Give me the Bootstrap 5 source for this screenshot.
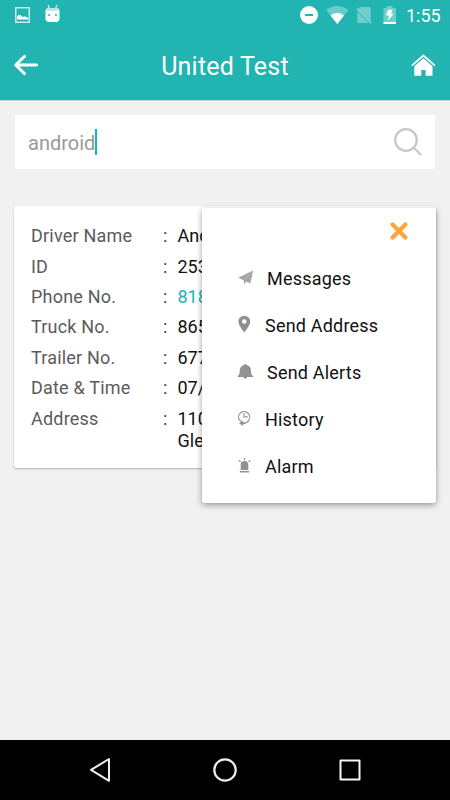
<!DOCTYPE html>
<html lang="en">
<head>
<meta charset="utf-8">
<meta name="viewport" content="width=device-width, initial-scale=1">
<title>United Test</title>
<link rel="stylesheet" href="https://cdn.jsdelivr.net/npm/bootstrap@5.3.0/dist/css/bootstrap.min.css">
<style>
body{font-family:Roboto,sans-serif;background:#f1f1f1;font-size:18px;line-height:22px;letter-spacing:.2px}
.screen{width:450px;height:800px;overflow:hidden}
svg{display:block;flex:none}
.app-head{background:#21b4b1;height:100px;box-shadow:0 1px 0 #bfdedf}
.status{height:30px;padding:0 10px 0 13px}
.clock{font-size:18px;letter-spacing:0;width:34px;padding-top:1px;white-space:nowrap}
.status-icons{margin-right:1px}
.toolbar{height:70px;padding:0 14px 0 13px}
.title{font-size:25px;line-height:30px;letter-spacing:.2px;padding:3px 0 0 1px}
.search{height:54px;margin:15px 15px 0;padding:0 13px;color:#999}
.search-text{font-size:20px;letter-spacing:0;padding-top:2px}
.caret{width:2.5px;height:26px;background:#10b9ba;margin-left:-.5px}
.driver{height:262px;margin:36.5px 14px 0;padding:19.8px 17px 0;border-radius:3px;box-shadow:0 1px 2px rgba(0,0,0,.28)}
.field-row{height:30.4px;line-height:22px}
.field-label{width:132px;color:#5b5b5b}
.colon{width:14.5px;color:#444}
.field-value{color:#111;white-space:nowrap;letter-spacing:0}
.phone{color:#19b5b5}
.menu{left:188px;top:2px;width:234px;height:295px;border-radius:3px;box-shadow:0 2px 6px rgba(0,0,0,.38);color:#111}
.menu-top{height:46px;padding:14px 28px 0}
.menu-item{height:47.1px;padding-left:35px}
.menu-item span{padding-top:3px}
.menu-icon{margin-right:14px}
.android-nav{height:60px}
.key{width:125px}
</style>
<script src="https://cdn.jsdelivr.net/npm/bootstrap@5.3.0/dist/js/bootstrap.bundle.min.js"></script>
</head>
<body>
<div class="screen d-flex flex-column">
  <header class="app-head text-white flex-shrink-0">
    <div class="status d-flex align-items-center">
      <svg width="52" height="30" viewBox="13 0 52 30"><path d="M15.800 7.800h13.400v14.400h-13.400z" fill="none" stroke="#fff" stroke-opacity=".75" stroke-width="1.500"/><path d="M17 19.500v-3l1.500-1.500h2l2 2 1.500-.6h1.500l2.500 1.600v1.500z" fill="#fff"/><path d="M48 5l1.500 3.500M57 5l-1.500 3.500" stroke="#fff" stroke-opacity=".75" stroke-width="1.300"/><path d="M47.500 8h10l2 2v9.500l-2 2.500h-10l-2-2.500v-9.500z" fill="#fff"/><path d="M47.500 8h10l1.200 2.800h-12.400z" fill="#b9e5e4"/><path d="M48 14h2v2h-2zm7 0h2v2h-2z" fill="#5ac7c5"/></svg>
      <svg class="status-icons ms-auto" width="106" height="30" viewBox="300 0 106 30"><circle cx="310" cy="15" r="9" fill="#fff"/><path d="M306 15h8" stroke="#21b4b1" stroke-width="2"/><path d="M327 10q11-8 22.500 0l-11.200 14z" fill="#fff" opacity=".33"/><path d="M331.500 15.500q6.500-4.800 13.500 0l-6.700 8.500z" fill="#fff"/><path d="M361 7h9.500l1.300 1.300v14.700h-13.500v-13z" fill="#fff" opacity=".35"/><path d="M356.500 8.500l15.800 15.200" stroke="#21b4b1" stroke-width="2"/><path d="M357.500 8.500l15 15" stroke="#8bd5d3" stroke-width="1.300"/><path d="M384.500 8h3v-2h6v2h3.500v16h-12.500z" fill="#fff" opacity=".35"/><path d="M384.500 22h12.500v2h-12.500z" fill="#fff"/><path d="M389 9.800h4.500l-1.400 4h2.600l-6 7.200 1.500-5.400h-3.200z" fill="#fff"/></svg>
      <span class="clock">1:55</span>
    </div>
    <div class="toolbar d-flex align-items-center justify-content-between">
      <svg width="26" height="24" viewBox="13 53 26 24" fill="none" stroke="#fff" stroke-width="2.900" stroke-linecap="round" stroke-linejoin="round"><path d="M16 65h20.600M24.500 56.400l-8.800 8.600 8.800 8.600"/></svg>
      <span class="title">United Test</span>
      <svg width="26" height="24" viewBox="410 53 26 24"><path d="M411.800 65.700l11.600-10.200 11.600 10.200" fill="none" stroke="#fff" stroke-width="1.700"/><path d="M414.300 66.200l9.100-7.900 9.100 7.900v9.600h-6.900v-5.800h-4.300v5.800h-7z" fill="#fff"/></svg>
    </div>
  </header>
  <main class="flex-grow-1">
    <div class="search bg-white d-flex align-items-center">
      <span class="search-text">android</span><span class="caret"></span>
      <svg class="ms-auto" width="28" height="28" viewBox="394 128.500 28 28" fill="none" stroke="#c8c8c8" stroke-width="2.200" stroke-linecap="round"><circle cx="406" cy="140.500" r="10.800"/><path d="M413.800 148.300l6.700 6.700"/></svg>
    </div>
    <section class="driver bg-white position-relative">
      <div class="field-row d-flex"><span class="field-label">Driver Name</span><span class="colon">:</span><span class="field-value">And</span></div>
      <div class="field-row d-flex"><span class="field-label">ID</span><span class="colon">:</span><span class="field-value">253</span></div>
      <div class="field-row d-flex"><span class="field-label">Phone No.</span><span class="colon">:</span><span class="field-value phone">818</span></div>
      <div class="field-row d-flex"><span class="field-label">Truck No.</span><span class="colon">:</span><span class="field-value">865</span></div>
      <div class="field-row d-flex"><span class="field-label">Trailer No.</span><span class="colon">:</span><span class="field-value">677</span></div>
      <div class="field-row d-flex"><span class="field-label">Date &amp; Time</span><span class="colon">:</span><span class="field-value">07/</span></div>
      <div class="field-row d-flex"><span class="field-label">Address</span><span class="colon">:</span><span class="field-value">110<br>Gle</span></div>
      <div class="menu bg-white position-absolute">
        <div class="menu-top d-flex justify-content-end"><svg width="18" height="18" viewBox="0 0 18 18" stroke="#ffa43a" stroke-width="4.200" stroke-linecap="round"><path d="M2.600 2.600l12.800 12.800M15.400 2.600L2.600 15.400"/></svg></div>
        <div class="menu-item d-flex align-items-center"><svg class="menu-icon" width="16" height="18" viewBox="237 268 16 18"><path d="M253 270.500l-2.600 13-4.300-2-2 3-.3-4.200-5.600-2.500z" fill="#a5a5a5"/><path d="M250.500 273.500l-6.500 6.800" fill="none" stroke="#ccc" stroke-width=".5"/></svg><span>Messages</span></div>
        <div class="menu-item d-flex align-items-center"><svg class="menu-icon" width="14" height="18" viewBox="237 315.500 14 18"><path d="M244.300 316.200a5.900 5.900 0 0 0-5.900 5.700c0 4 5.900 11 5.900 11s5.900-7 5.900-11a5.900 5.900 0 0 0-5.900-5.700zm0 3.500a2.300 2.300 0 1 1 0 4.600 2.300 2.300 0 0 1 0-4.600z" fill="#909090" fill-rule="evenodd"/></svg><span>Send Address</span></div>
        <div class="menu-item d-flex align-items-center"><svg class="menu-icon" width="16" height="18" viewBox="237 362 16 18"><path d="M245.300 364c.8 0 1 .4 1.100.9 3.400.7 4.600 3 4.600 6 0 3 .5 3.700 1.900 5v1h-5.700q-.3 1.800-1.900 1.800t-1.900-1.800h-5.500v-1c1.400-1.300 1.800-2 1.800-5 0-3 1.200-5.300 4.500-6 .1-.5.300-.9 1.100-.9z" fill="#929292"/></svg><span>Send Alerts</span></div>
        <div class="menu-item d-flex align-items-center"><svg class="menu-icon" width="14" height="18" viewBox="237 409 14 18" fill="none" stroke="#949494" stroke-width="1.200"><path d="M239.600 420.500a5.600 5.600 0 1 1 9.200-.2c-.9 1.700-3 3.100-5.500 3.400"/><path d="M244 413.200v3.600h3.600M239.600 420.200l2 1.200"/><path d="M239 423.300l3.800-2.800v1.800h2.200v2h-2.200v1.700z" fill="#949494" stroke="none"/></svg><span>History</span></div>
        <div class="menu-item d-flex align-items-center"><svg class="menu-icon" width="14" height="18" viewBox="237 456 14 18"><path d="M240.700 470v-5.200a3.800 3.800 0 0 1 7.600 0v5.200zM239.800 470.900h9.300v1.500h-9.300z" fill="#929292"/><path d="M244.500 458v2.200M238.600 460.400l2 1.400M250.500 460.400l-2 1.400" stroke="#929292" stroke-width="1.200"/></svg><span>Alarm</span></div>
      </div>
    </section>
  </main>
  <nav class="android-nav bg-black d-flex justify-content-center align-items-center flex-shrink-0">
    <div class="key d-flex justify-content-center"><svg width="26" height="26" viewBox="87 757 26 26" fill="none" stroke="#eee" stroke-width="2" stroke-linejoin="round"><path d="M109 759v21.800l-18-10.900z"/></svg></div>
    <div class="key d-flex justify-content-center"><svg width="26" height="26" viewBox="212 757 26 26" fill="none" stroke="#eee" stroke-width="2.200"><circle cx="225" cy="770" r="10.700"/></svg></div>
    <div class="key d-flex justify-content-center"><svg width="26" height="26" viewBox="337 757 26 26" fill="none" stroke="#f5f5f5" stroke-width="2" stroke-linejoin="round"><path d="M340.500 760.500h19v19h-19z"/></svg></div>
  </nav>
</div>
</body>
</html>
